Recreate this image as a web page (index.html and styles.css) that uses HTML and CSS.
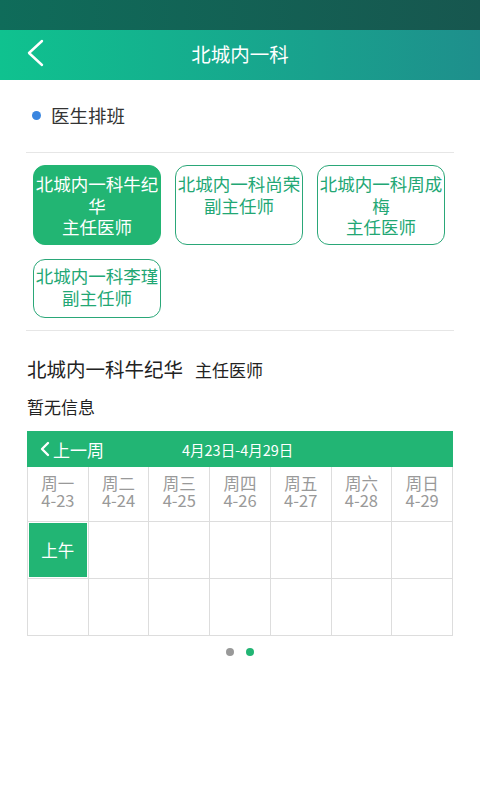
FILE: index.html
```html
<!DOCTYPE html>
<html lang="zh">
<head>
<meta charset="utf-8">
<link rel="stylesheet" href="styles.css">
</head>
<body>
<div class="status"></div>
<div class="nav">
  <svg class="back" width="20" height="28" viewBox="0 0 20 28"><path d="M16 2 L3 14 L16 26" fill="none" stroke="#fff" stroke-width="2.4" stroke-linecap="round" stroke-linejoin="round"/></svg>
  <div class="title">北城内一科</div>
</div>
<div class="section-head"><span class="dot"></span><span>医生排班</span></div>
<div class="divider"></div>
<div class="doctors">
  <div class="doc active">北城内一科牛纪华<br>主任医师</div>
  <div class="doc">北城内一科尚荣<br>副主任师</div>
  <div class="doc">北城内一科周成梅<br>主任医师</div>
  <div class="doc short">北城内一科李瑾<br>副主任师</div>
</div>
<div class="divider"></div>
<div class="doc-name">北城内一科牛纪华<span class="rank">主任医师</span></div>
<div class="noinfo">暂无信息</div>
<div class="table">
  <div class="tbar">
    <span class="prev"><svg width="12" height="16" viewBox="0 0 12 16"><path d="M9 2 L3 8 L9 14" fill="none" stroke="#fff" stroke-width="2.4" stroke-linecap="round" stroke-linejoin="round"/></svg>上一周</span>
    <span class="range">4月23日-4月29日</span>
  </div>
  <div class="grid">
    <div class="cell day"><span>周一</span><span>4-23</span></div>
    <div class="cell day"><span>周二</span><span>4-24</span></div>
    <div class="cell day"><span>周三</span><span>4-25</span></div>
    <div class="cell day"><span>周四</span><span>4-26</span></div>
    <div class="cell day"><span>周五</span><span>4-27</span></div>
    <div class="cell day"><span>周六</span><span>4-28</span></div>
    <div class="cell day"><span>周日</span><span>4-29</span></div>
    <div class="cell slot"><span class="am">上午</span></div>
    <div class="cell slot"></div>
    <div class="cell slot"></div>
    <div class="cell slot"></div>
    <div class="cell slot"></div>
    <div class="cell slot"></div>
    <div class="cell slot"></div>
    <div class="cell slot"></div>
    <div class="cell slot"></div>
    <div class="cell slot"></div>
    <div class="cell slot"></div>
    <div class="cell slot"></div>
    <div class="cell slot"></div>
    <div class="cell slot"></div>
  </div>
</div>
<div class="pager"><span class="pd gray"></span><span class="pd green"></span></div>
</body>
</html>
```
FILE: styles.css
```css
* { box-sizing: border-box; }
html, body { margin: 0; padding: 0; background: #fff; }
body {
  width: 480px;
  height: 800px;
  font-family: "Noto Sans CJK SC", "Noto Sans", sans-serif;
  color: #333;
  overflow: hidden;
}
.status {
  height: 30px;
  background: linear-gradient(90deg, #0f6c5a, #17574f);
}
.nav {
  height: 50px;
  background: linear-gradient(90deg, #0fc28f, #1e8f8c);
  display: flex;
  align-items: center;
  justify-content: center;
  position: relative;
}
.back { position: absolute; left: 26px; top: 9px; }
.title { color: #fff; font-size: 19.5px; line-height: 1; margin-top: -2px; }
.section-head {
  height: 72px;
  display: flex;
  align-items: center;
  padding-left: 32px;
  padding-bottom: 2px;
  font-size: 18.5px;
  color: #333;
}
.dot {
  width: 9px; height: 9px; border-radius: 50%;
  background: #3a86e0;
  margin-right: 10px;
}
.divider { height: 1px; background: #e6e6e6; margin: 0 26px; }
.doctors {
  display: grid;
  grid-template-columns: 128px 128px 128px;
  column-gap: 14px;
  row-gap: 14px;
  padding: 12px 0 12px 33px;
}
.doc {
  height: 80px;
  border: 1.5px solid #2aa778;
  border-radius: 12px;
  color: #22a774;
  font-size: 17.5px;
  line-height: 21.5px;
  text-align: center;
  padding-top: 7px;
  word-break: break-all;
  overflow: hidden;
}
.doc.active { background: #22b573; color: #fff; border-color: #22b573; }
.doc.short { height: 59px; padding-top: 5px; }
.doc-name {
  padding: 25px 0 0 27px;
  font-size: 19.5px;
  color: #222;
  line-height: 26px;
}
.rank { font-size: 17px; margin-left: 12px; }
.noinfo { padding: 12px 0 0 27px; font-size: 17px; color: #222; line-height: 24px; }
.table { margin: 12px 27px 0 27px; }
.tbar {
  height: 36px;
  background: #22b574;
  color: #fff;
  display: flex;
  align-items: center;
  padding-left: 12px;
}
.prev { display: flex; align-items: center; font-size: 17px; width: 143px; }
.prev svg { margin-right: 2px; }
.range { font-size: 14.5px; }
.grid {
  display: grid;
  grid-template-columns: repeat(7, 1fr);
  border-left: 1px solid #ddd;
}
.cell { border-right: 1px solid #ddd; border-bottom: 1px solid #ddd; }
.day {
  height: 55px;
  color: #999;
  font-size: 16.5px;
  line-height: 17px;
  padding-top: 8px;
  display: flex;
  flex-direction: column;
  align-items: center;
}
.slot { height: 57px; display: flex; }
.am {
  flex: 1;
  margin: 1px;
  background: #22b574;
  color: #fff;
  font-size: 16.5px;
  display: flex;
  align-items: center;
  justify-content: center;
}
.pager { display: flex; justify-content: center; gap: 12px; padding-top: 12px; }
.pd { width: 8px; height: 8px; border-radius: 50%; }
.pd.gray { background: #999; }
.pd.green { background: #22b574; }
```
